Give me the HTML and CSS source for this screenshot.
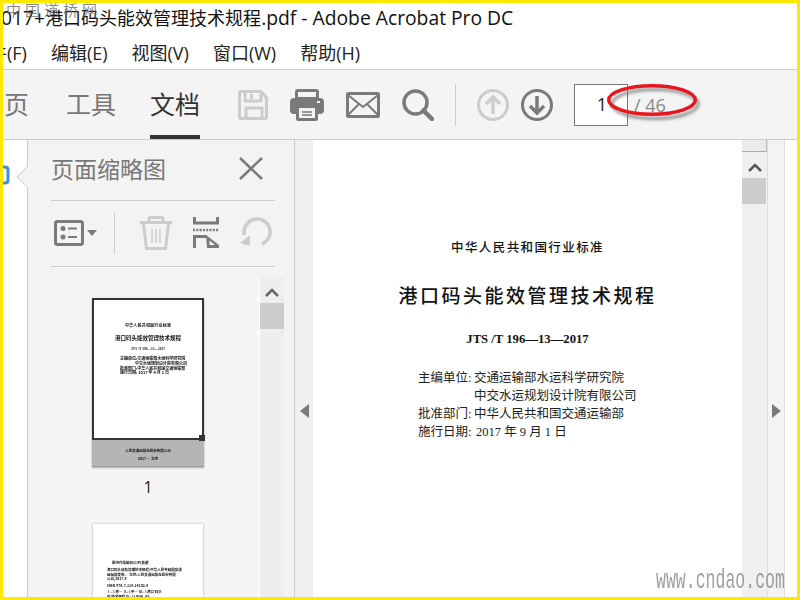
FILE: index.html
```html
<!DOCTYPE html>
<html lang="zh">
<head>
<meta charset="utf-8">
<title>Adobe Acrobat Pro DC</title>
<link rel="stylesheet" href="styles.css">
</head>
<body>
<div class="frame">
  <div class="titlebar"><span class="title-text"><span class="title-latin">2017+</span>港口码头能效管理技术规程<span class="title-latin">.pdf - Adobe Acrobat Pro DC</span></span></div>
  <div class="menubar">
    <span class="menu-item menu-first">文件(F)</span>
    <span class="menu-item">编辑(E)</span>
    <span class="menu-item">视图(V)</span>
    <span class="menu-item">窗口(W)</span>
    <span class="menu-item">帮助(H)</span>
  </div>
  <div class="toolbar">
    <span class="tab tab-first">主页</span>
    <span class="tab">工具</span>
    <span class="tab tab-active">文档</span>
    <svg class="icon save" width="30" height="30" viewBox="0 0 30 30" fill="none" stroke="#ccc" stroke-width="3" stroke-linejoin="round"><path d="M1.500 3Q1.500 1.500 3 1.500H23L28.500 7.500V27Q28.500 28.500 27 28.500H3Q1.500 28.500 1.500 27Z"/><path d="M7 2V11H23V2M8 28V18H24V28"/><rect x="12" y="4" width="3" height="5" fill="#ccc" stroke="none"/></svg>
    <svg class="icon print" width="34" height="32" viewBox="0 0 34 32"><path d="M5 10V3Q5 0 8 0H26Q29 0 29 3V10Z" fill="#7a7a7a"/><rect x="8" y="3" width="18" height="5" fill="#f4f4f4"/><rect x="0" y="9" width="34" height="16" rx="4" fill="#7a7a7a"/><rect x="6" y="18" width="22" height="14" rx="2" fill="#7a7a7a"/><rect x="9" y="19" width="16" height="10" fill="#f4f4f4"/><rect x="27" y="12" width="3" height="2" fill="#f4f4f4"/><path d="M12 23H22M12 26H22" stroke="#7a7a7a" stroke-width="1.500"/></svg>
    <svg class="icon mail" width="34" height="26" viewBox="0 0 34 26" fill="none" stroke="#7a7a7a" stroke-width="3"><rect x="1.500" y="1.500" width="31" height="23" rx="1"/><path d="M2 3L17 15L32 3M2 23L13 12M32 23L21 12" stroke-width="2"/></svg>
    <svg class="icon search" width="32" height="32" viewBox="0 0 32 32" fill="none" stroke="#7a7a7a"><circle cx="13.500" cy="13.500" r="11.500" stroke-width="3.500"/><path d="M21.500 21.500L30 30" stroke-width="4.500" stroke-linecap="round"/></svg>
    <span class="tool-sep"></span>
    <svg class="icon nav-up" width="32" height="32" viewBox="0 0 32 32" fill="none" stroke="#ccc" stroke-width="3"><circle cx="16" cy="16" r="14.500"/><path d="M16 25V8M9 15L16 8L23 15" stroke-width="3.500"/></svg>
    <svg class="icon nav-down" width="32" height="32" viewBox="0 0 32 32" fill="none" stroke="#7a7a7a" stroke-width="3"><circle cx="16" cy="16" r="14.500"/><path d="M16 7V24M9 17L16 24L23 17" stroke-width="3.500"/></svg>
    <span class="page-box">1</span>
    <span class="page-total">/ 46</span>
    <svg class="ring" width="104" height="44" viewBox="0 0 104 44"><defs><filter id="soft" x="-20%" y="-40%" width="140%" height="180%"><feGaussianBlur stdDeviation="1.500"/></filter></defs><ellipse cx="50" cy="22" rx="43" ry="14.500" fill="none" stroke="#666" stroke-opacity=".7" stroke-width="3" filter="url(#soft)"/><ellipse cx="47" cy="18" rx="43.300" ry="14.300" fill="none" stroke="#e8171d" stroke-width="3.500"/></svg>
  </div>
  <div class="main">
    <div class="rail">
      <svg class="rail-mark" width="7" height="20" viewBox="0 0 7 20" fill="none" stroke="#3c93d6" stroke-width="3"><path d="M0 2H2Q5 2 5 5V15Q5 18 2 18H0"/></svg>
    </div>
    <div class="panel">
      <svg class="notch" width="12" height="22" viewBox="0 0 12 22"><path d="M12 0L1 11L12 22" fill="#f3f3f3" stroke="#ccc"/></svg>
      <div class="panel-head">
        <span class="panel-title">页面缩略图</span>
        <svg class="close" width="24" height="23" viewBox="0 0 24 23" fill="none" stroke="#7a7a7a" stroke-width="2.500"><path d="M1 1L23 22M23 1L1 22"/></svg>
      </div>
      <div class="panel-tools">
        <svg class="tool-list" width="44" height="26" viewBox="0 0 44 26" fill="none" stroke="#7a7a7a" stroke-width="3"><rect x="1.500" y="1.500" width="27" height="23" rx="2"/><circle cx="9" cy="8.500" r="2.500" fill="#7a7a7a" stroke="none"/><circle cx="9" cy="17" r="2.500" fill="#7a7a7a" stroke="none"/><path d="M14 8.500H23M14 17H23" stroke-width="2"/><path d="M33 10H43L38 16Z" fill="#7a7a7a" stroke="none"/></svg>
        <span class="panel-sep"></span>
        <svg class="tool-trash" width="32" height="34" viewBox="0 0 32 34" fill="none" stroke="#ccc" stroke-width="3" stroke-linejoin="round"><path d="M0 6.500H32M9 6V2.500Q9 1.500 10 1.500H22Q23 1.500 23 2.500V6"/><path d="M3.500 8L6.500 32.500H25.500L28.500 8"/><path d="M12 13V27M16 13V27M20 13V27" stroke-width="1.500"/></svg>
        <svg class="tool-split" width="27" height="31" viewBox="0 0 27 31" fill="none" stroke="#7a7a7a" stroke-width="3"><path d="M1.500 0V6H24.500V0"/><path d="M0 13H26" stroke-width="2.500" stroke-dasharray="2 1.300"/><path d="M1.500 31V19.500H14"/><path d="M13 18L26 28V31H14Z" fill="#7a7a7a" stroke="none"/><path d="M16.500 23.500L22 28H16.500Z" fill="#f3f3f3" stroke="none"/></svg>
        <svg class="tool-rotate" width="33" height="31" viewBox="0 0 33 31" fill="none" stroke="#ccc" stroke-width="3.500"><path d="M22 27A13 13 0 1 0 4.500 18"/><path d="M0 26L10 29V18Z" fill="#ccc" stroke="none"/></svg>
      </div>
      <div class="panel-body">
        <div class="thumbs">
          <div class="thumb thumb-current">
            <div class="thumb-sheet">
              <p class="t-a">中华人民共和国行业标准</p>
              <p class="t-b">港口码头能效管理技术规程</p>
              <p class="t-c">JTS /T 196—13—2017</p>
              <p class="t-d">主编单位:交通运输部水运科学研究院</p>
              <p class="t-d t-ind">中交水运规划设计院有限公司</p>
              <p class="t-d">批准部门:中华人民共和国交通运输部</p>
              <p class="t-d">施行日期: 2017 年 9 月 1 日</p>
              <span class="thumb-handle"></span>
            </div>
            <div class="thumb-foot">
              <p class="f-a">人民交通出版社股份有限公司</p>
              <p class="f-b">2017 · 北京</p>
            </div>
          </div>
          <div class="thumb-num">1</div>
          <div class="thumb thumb-next">
            <p class="n-a">图书在版编目(CIP)数据</p>
            <p class="n-b">港口码头能效管理技术规程/中华人民共和国交通</p>
            <p class="n-b">运输部发布.—北京:人民交通出版社股份有限</p>
            <p class="n-b">公司,2017.9</p>
            <p class="n-b n-gap">ISBN 978-7-114-14102-4</p>
            <p class="n-b n-gap">Ⅰ.①港… Ⅱ.①中… Ⅲ.①港口 码头</p>
            <p class="n-b">能 技术规程 Ⅳ.①U656 -65</p>
            <p class="n-b n-gap">中国版本图书馆CIP数据核字(2017)</p>
          </div>
        </div>
        <div class="thumb-scroll">
          <svg class="chev" width="14" height="9" viewBox="0 0 14 9" fill="none" stroke="#666" stroke-width="2.500"><path d="M1 8L7 2L13 8"/></svg>
          <span class="scroll-thumb"></span>
        </div>
      </div>
    </div>
    <div class="gutter"><span class="arrow-left"></span></div>
    <div class="page">
      <p class="doc-kicker">中华人民共和国行业标准</p>
      <h1 class="doc-title">港口码头能效管理技术规程</h1>
      <p class="doc-code">JTS /T 196—13—2017</p>
      <dl class="doc-meta">
        <dt>主编单位:</dt><dd>交通运输部水运科学研究院</dd>
        <dt></dt><dd>中交水运规划设计院有限公司</dd>
        <dt>批准部门:</dt><dd>中华人民共和国交通运输部</dd>
        <dt>施行日期:</dt><dd class="doc-date">2017 年 9 月 1 日</dd>
      </dl>
    </div>
    <div class="page-scroll">
      <span class="scroll-cap"></span>
      <svg class="chev chev-page" width="14" height="9" viewBox="0 0 14 9" fill="none" stroke="#555" stroke-width="2.500"><path d="M1 8L7 2L13 8"/></svg>
      <span class="scroll-thumb"></span>
    </div>
    <div class="side"><span class="arrow-right"></span></div>
    <div class="blank"></div>
  </div>
  <span class="mark-top">中国道桥网</span>
  <span class="mark-bottom">www.cndao.com</span>
</div>
</body>
</html>
```
FILE: styles.css
```css
* { box-sizing: border-box; }
html, body { margin: 0; padding: 0; background: #fff; }
p, h1, dl, dd, dt { margin: 0; padding: 0; font-weight: normal; }
.frame {
  position: relative;
  width: 800px;
  height: 600px;
  border: 3px solid #ffe900;
  overflow: hidden;
  display: flex;
  flex-direction: column;
  background: #fff;
  font-family: "Open Sans", "Noto Sans CJK SC", sans-serif;
  color: #222;
}
.titlebar {
  height: 31px;
  flex: none;
  overflow: hidden;
  white-space: nowrap;
  font-size: 18px;
  line-height: 29px;
  color: #111;
}
.title-text { display: inline-block; margin-left: -13px; }
.title-latin { font-size: 19.300px; }
.menubar {
  height: 36px;
  flex: none;
  display: flex;
  align-items: center;
  gap: 24px;
  border-bottom: 1px solid #ccc;
  overflow: hidden;
  white-space: nowrap;
  font-size: 18px;
  color: #222;
}
.menu-item { flex: none; }
.menu-first { margin-left: -32px; }
.toolbar {
  position: relative;
  height: 70px;
  flex: none;
  display: flex;
  align-items: center;
  background: #f4f4f4;
  border-bottom: 1px solid #ccc;
  overflow: hidden;
}
.tab {
  flex: none;
  align-self: stretch;
  display: flex;
  align-items: center;
  justify-content: center;
  width: 50px;
  margin-right: 34px;
  padding-top: 1px;
  font-size: 25px;
  color: #777;
  border-bottom: 4px solid transparent;
}
.tab-first { margin-left: -24px; margin-right: 37px; }
.tab-active { color: #333; border-bottom-color: #333; margin-right: 38px; }
.icon { flex: none; display: block; }
.print { margin-left: 22px; }
.mail { margin-left: 22px; }
.search { margin-left: 22px; }
.tool-sep { flex: none; width: 1px; height: 42px; margin: 0 21px 0 21px; background: #ccc; }
.nav-down { margin-left: 12px; }
.page-box {
  flex: none;
  width: 54px;
  height: 42px;
  margin-left: 21px;
  padding-right: 20px;
  border: 1px solid #777;
  background: #fff;
  text-align: right;
  font-size: 18px;
  line-height: 38px;
  color: #222;
}
.page-total { flex: none; margin-left: 6px; font-size: 18px; color: #888; }
.ring { position: absolute; left: 602px; top: 12px; }
.main { flex: 1; min-height: 0; display: flex; }
.rail { position: relative; flex: none; width: 24px; background: #fff; }
.rail-mark { position: absolute; left: 0; top: 25px; }
.panel {
  position: relative;
  flex: none;
  width: 268px;
  display: flex;
  flex-direction: column;
  background: #f3f3f3;
  border-left: 1px solid #ccc;
  border-right: 1px solid #ccc;
}
.notch { position: absolute; left: -12px; top: 26px; }
.panel-head {
  flex: none;
  height: 61px;
  margin: 0 19px 0 23px;
  display: flex;
  align-items: center;
  justify-content: space-between;
  border-bottom: 1px solid #ccc;
  padding: 0 12px 3px 0;
}
.panel-title { font-size: 23px; color: #777; margin-bottom: 2px; }
.panel-tools {
  flex: none;
  height: 66px;
  margin: 0 19px 0 23px;
  display: flex;
  align-items: center;
  border-bottom: 1px solid #ccc;
  padding: 0 0 2px 3px;
}
.panel-sep { flex: none; width: 1px; height: 42px; margin: 0 25px 0 16px; background: #ccc; }
.tool-split { margin-left: 21px; }
.tool-rotate { margin-left: 20px; }
.panel-body { flex: 1; min-height: 0; margin: 10px 9px 0 8px; display: flex; overflow: hidden; }
.thumbs {
  flex: none;
  width: 224px;
  padding: 21px 0 0 56px;
  background: #f5f5f5;
  border-right: 1px solid #fff;
  overflow: hidden;
}
.thumb { font-family: "Noto Sans CJK SC", sans-serif; color: #111; }
.thumb p { filter: blur(.25px); font-weight: 700; }
.thumb-current { width: 112px; box-shadow: 0 1px 2px rgba(0, 0, 0, .3); }
.thumb-sheet {
  position: relative;
  height: 142px;
  border: 2px solid #333;
  background: #fff;
  padding-top: 22px;
  text-align: center;
}
.t-a { font-size: 4px; line-height: 6px; letter-spacing: .2px; }
.t-b { font-size: 5.500px; line-height: 8px; margin-top: 6px; }
.t-c { font-size: 3.500px; line-height: 6px; margin-top: 4px; font-family: "Liberation Serif", serif; }
.t-d { font-size: 4px; line-height: 4.800px; text-align: left; padding-left: 26px; }
.t-c + .t-d { margin-top: 4px; }
.t-ind { padding-left: 41px; }
.thumb-handle { position: absolute; right: -3px; bottom: -3px; width: 6px; height: 6px; background: #333; }
.thumb-foot {
  height: 27px;
  background: #b5b5b5;
  border-bottom: 1px solid #999;
  text-align: center;
  padding-top: 7px;
}
.f-a, .f-b { font-size: 3.500px; line-height: 8px; }
.thumb-num { width: 112px; margin-top: 9px; height: 48px; text-align: center; font-family: "Open Sans", sans-serif; font-size: 16px; line-height: 22px; color: #222; }
.thumb-next {
  width: 110px;
  height: 120px;
  margin-left: 1px;
  background: #fff;
  box-shadow: 0 0 2px rgba(0, 0, 0, .35);
  padding: 36px 8px 0 14px;
}
.n-a { font-size: 3.500px; line-height: 6px; padding-left: 5px; margin-bottom: 2px; }
.n-b { font-size: 3.500px; line-height: 4.500px; white-space: nowrap; }
.n-gap { margin-top: 2px; }
.thumb-scroll {
  flex: none;
  width: 24px;
  background: #eee;
  display: flex;
  flex-direction: column;
  align-items: center;
}
.chev { flex: none; display: block; margin-top: 11px; }
.scroll-thumb { flex: none; display: block; width: 100%; height: 26px; margin-top: 6px; background: #ccc; }
.gutter { flex: none; width: 18px; background: #f0f0f0; display: flex; align-items: center; justify-content: center; padding-top: 84px; }
.arrow-left { width: 0; height: 0; border-style: solid; border-width: 7px 9px 7px 0; border-color: transparent #7a7a7a transparent transparent; }
.page { flex: none; width: 429px; background: #fff; padding-top: 98px; color: #222; font-family: "Noto Sans CJK SC", sans-serif; }
.doc-kicker { text-align: center; font-size: 12.500px; line-height: 18px; letter-spacing: 1.400px; font-weight: 500; color: #111; }
.doc-title { text-align: center; font-size: 19px; line-height: 28px; letter-spacing: 2.500px; font-weight: 500; color: #111; margin-top: 25px; }
.doc-code { text-align: center; font-family: "Liberation Serif", serif; font-weight: bold; font-size: 12.700px; line-height: 18px; margin-top: 21px; color: #111; }
.doc-meta { display: grid; grid-template-columns: 56px 1fr; margin: 21px 0 0 105px; font-family: "Liberation Serif", "Noto Sans CJK SC", serif; font-size: 12.500px; line-height: 18px; color: #222; }
.doc-date { padding-left: 2px; }
.page-scroll {
  flex: none;
  width: 25px;
  background: #f0f0f0;
  display: flex;
  flex-direction: column;
  align-items: center;
}
.scroll-cap { flex: none; display: block; width: 100%; height: 12px; background: #ebebeb; border-bottom: 1px solid #aaa; border-right: 1px solid #bbb; }
.chev-page { margin-top: 11px; }
.page-scroll .scroll-thumb { width: 24px; align-self: flex-start; }
.side {
  flex: none;
  width: 18px;
  background: #f3f3f3;
  border-left: 1px solid #ddd;
  border-right: 1px solid #ddd;
  display: flex;
  align-items: center;
  justify-content: center;
  padding-top: 84px;
}
.arrow-right { width: 0; height: 0; border-style: solid; border-width: 7px 0 7px 9px; border-color: transparent transparent transparent #7a7a7a; }
.blank { flex: 1; background: #fff; }
.mark-top {
  position: absolute;
  left: 3px;
  top: -3px;
  font-family: "Noto Sans CJK SC", sans-serif;
  font-size: 15px;
  line-height: 20px;
  letter-spacing: 4px;
  color: rgba(100, 100, 100, .75);
  pointer-events: none;
}
.mark-bottom {
  position: absolute;
  left: 653px;
  top: 562px;
  font-family: "Liberation Mono", monospace;
  font-size: 28px;
  line-height: 32px;
  color: rgba(120, 120, 120, .7);
  transform: scaleX(.59);
  transform-origin: left top;
  white-space: nowrap;
}
```
